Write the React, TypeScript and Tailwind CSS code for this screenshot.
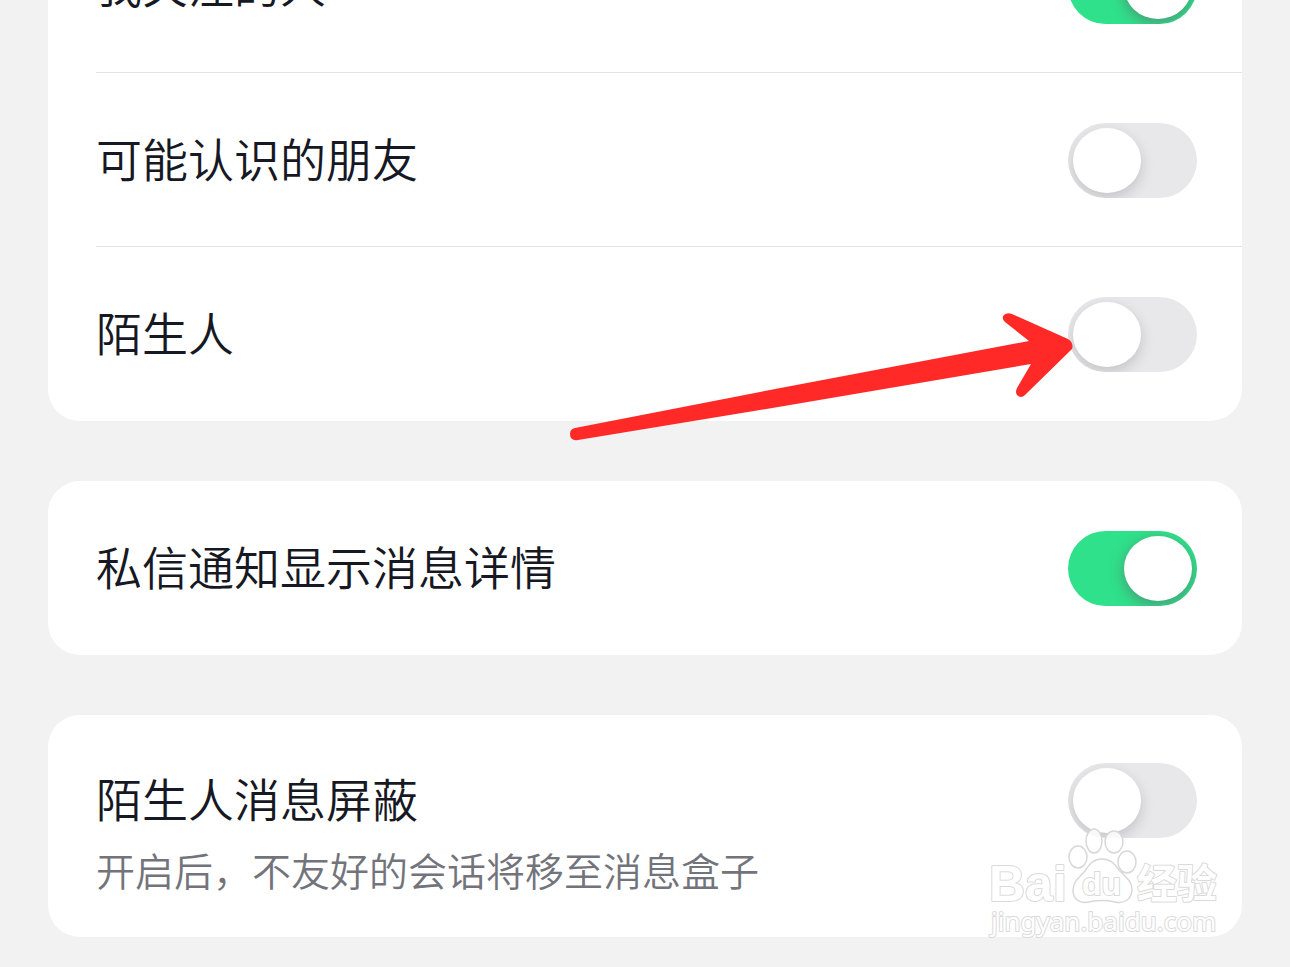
import clsx from "clsx";
import type { ReactNode } from "react";

type SwitchRowProps = {
  id: string;
  title: string;
  description?: string;
  defaultChecked?: boolean;
  divider?: boolean;
};

const SwitchRow = ({ id, title, description, defaultChecked, divider }: SwitchRowProps) => {
  return (
    <div
      className={clsx(
        "ml-12 flex items-start justify-between pr-[45px]",
        divider && "border-t border-[#e3e3e4]",
        description ? "pt-12 pb-[33px]" : "pt-[50px] pb-12"
      )}
    >
      <div className="flex flex-col gap-1">
        <label htmlFor={id} className="text-[46px] leading-[68px] font-[350] text-[#161823]">
          {title}
        </label>
        {description && (
          <p id={`${id}-hint`} className="text-[39px] leading-[68px] font-[350] text-[#73747b]">
            {description}
          </p>
        )}
      </div>
      <input
        id={id}
        type="checkbox"
        role="switch"
        defaultChecked={defaultChecked}
        aria-describedby={description ? `${id}-hint` : undefined}
        className="flex h-[75px] w-[129px] shrink-0 cursor-pointer appearance-none overflow-hidden rounded-full bg-[#e8e8ea] p-[5px] before:h-[65px] before:w-[68px] before:rounded-[50%] before:bg-white before:shadow-[0_5px_14px_rgba(0,0,0,0.16)] before:content-[''] checked:justify-end checked:bg-[#2fe18a] checked:before:shadow-[0_4px_14px_rgba(100,80,100,0.5)]"
      />
    </div>
  );
};

const Card = ({ children }: { children: ReactNode }) => (
  <section className="relative rounded-[32px] bg-white pb-px">{children}</section>
);

const Arrow = () => (
  <svg
    className="pointer-events-none absolute right-[168px] bottom-[-22px] h-[132px] w-[506px]"
    viewBox="0 0 506 132"
    aria-hidden="true"
  >
    <path
      d="M7 117 L192 81 L461 30 L437 11 Q433 7 436 4 Q439 1 444 3 L500 28 Q506 32 504 38 L457 84 Q453 88 449 84 Q447 81 449 77 L463 53 L192 99 L10 129 Q2 130 2 123 Q2 118 7 117 Z"
      fill="#ff2a28"
    />
  </svg>
);

const Watermark = () => (
  <svg
    className="pointer-events-none absolute top-[110px] right-[17px] h-[120px] w-[240px]"
    viewBox="0 0 240 120"
    role="img"
    aria-label="Baidu 经验"
  >
    <g fill="#fff" fillOpacity="0.85" stroke="#d8d8d8" strokeWidth="1.5">
      <ellipse cx="93" cy="32" rx="9" ry="11" />
      <ellipse cx="109" cy="16" rx="8" ry="12" />
      <ellipse cx="129" cy="17" rx="9" ry="11" />
      <ellipse cx="142" cy="37" rx="9" ry="11" />
      <path d="M117 34 C125 34 129 38 134 45 C140 52 147 55 147 65 C146 75 139 79 130 77 C121 75 113 75 104 77 C94 79 88 74 88 65 C88 56 95 52 100 46 C105 38 109 34 117 34 Z" />
    </g>
    <g
      fill="#fff"
      stroke="#dadada"
      strokeWidth="2"
      strokeLinejoin="round"
      style={{ paintOrder: "stroke" }}
    >
      <text x="4" y="76" fontFamily="Liberation Sans, sans-serif" fontWeight="700" fontSize="50">
        Bai
      </text>
      <text x="97" y="70" fontFamily="Liberation Sans, sans-serif" fontWeight="700" fontSize="32">
        du
      </text>
      <text x="152" y="73" fontFamily="Noto Sans CJK SC, sans-serif" fontWeight="700" fontSize="40">
        经验
      </text>
      <text x="6" y="106" fontFamily="Noto Sans, sans-serif" fontWeight="400" fontSize="26">
        jingyan.baidu.com
      </text>
    </g>
  </svg>
);

export default function App() {
  return (
    <div className="h-screen overflow-hidden bg-[#f2f2f2] font-['Noto_Sans_CJK_SC',sans-serif]">
      {/* list is scrolled, the first row is partly out of view */}
      <main className="mx-12 -mt-[102px] flex flex-col gap-[60px]">
        <Card>
          <SwitchRow id="following" title="我关注的人" divider defaultChecked />
          <SwitchRow id="maybe-friends" title="可能认识的朋友" divider />
          <SwitchRow id="strangers" title="陌生人" divider />
          <Arrow />
        </Card>
        <Card>
          <SwitchRow id="message-detail" title="私信通知显示消息详情" defaultChecked />
        </Card>
        <Card>
          <SwitchRow
            id="block-strangers"
            title="陌生人消息屏蔽"
            description="开启后，不友好的会话将移至消息盒子"
          />
          <Watermark />
        </Card>
      </main>
    </div>
  );
}
